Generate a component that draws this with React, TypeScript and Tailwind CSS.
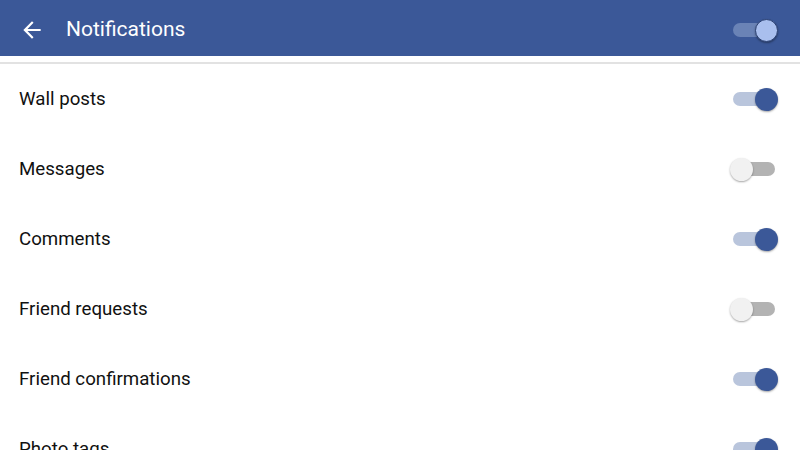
import React, { useState } from 'react'

const rows: { label: string; on: boolean }[] = [
  { label: 'Wall posts', on: true },
  { label: 'Messages', on: false },
  { label: 'Comments', on: true },
  { label: 'Friend requests', on: false },
  { label: 'Friend confirmations', on: true },
  { label: 'Photo tags', on: true },
]

const Toggle = (props: { on: boolean; onClick: () => void; header?: boolean }) => {
  const track = props.header ? 'bg-[#6a83b6]' : props.on ? 'bg-[#b9c5dc]' : 'bg-[#b3b3b3]'
  const thumb = props.header
    ? 'border border-[#2b4173] bg-[#a9bfee]'
    : props.on
      ? 'bg-[#3b5898]'
      : 'bg-[#f1f1f1]'
  return (
    <button
      onClick={props.onClick}
      className={
        props.on
          ? 'relative flex h-[24px] w-[48px] items-center justify-end'
          : 'relative flex h-[24px] w-[48px] items-center justify-start'
      }
    >
      <span className={'absolute inset-x-[3px] h-[14px] rounded-full ' + track} />
      <span
        className={
          'relative h-[23px] w-[23px] rounded-full shadow-[0_1px_2px_rgba(0,0,0,0.35)] ' + thumb
        }
      />
    </button>
  )
}

export default function App() {
  const [master, setMaster] = useState(true)
  const [state, setState] = useState(rows.map((r) => r.on))

  return (
    <div className="h-[450px] w-[800px] overflow-hidden bg-white font-['Roboto',sans-serif]">
      <header className="flex h-[56px] items-center bg-[#3b5898] pl-[19px] pr-[22px] pt-[4px]">
        <svg width="26" height="26" viewBox="0 0 24 24" fill="white">
          <path d="M20 11H7.83l5.59-5.59L12 4l-8 8 8 8 1.41-1.41L7.83 13H20v-2z" />
        </svg>
        <h1 className="ml-[21px] text-[21px] text-white">Notifications</h1>
        <div className="ml-auto">
          <Toggle header on={master} onClick={() => setMaster(!master)} />
        </div>
      </header>
      <div className="mt-[6px] h-[2px] bg-[#e2e2e2]" />
      <ul>
        {rows.map((r, i) => (
          <li key={r.label} className="flex h-[70px] items-center pl-[19px] pr-[22px]">
            <span className="text-[18.7px] text-[#111]">{r.label}</span>
            <div className="ml-auto">
              <Toggle
                on={state[i]}
                onClick={() => setState(state.map((s, j) => (j === i ? !s : s)))}
              />
            </div>
          </li>
        ))}
      </ul>
    </div>
  )
}
